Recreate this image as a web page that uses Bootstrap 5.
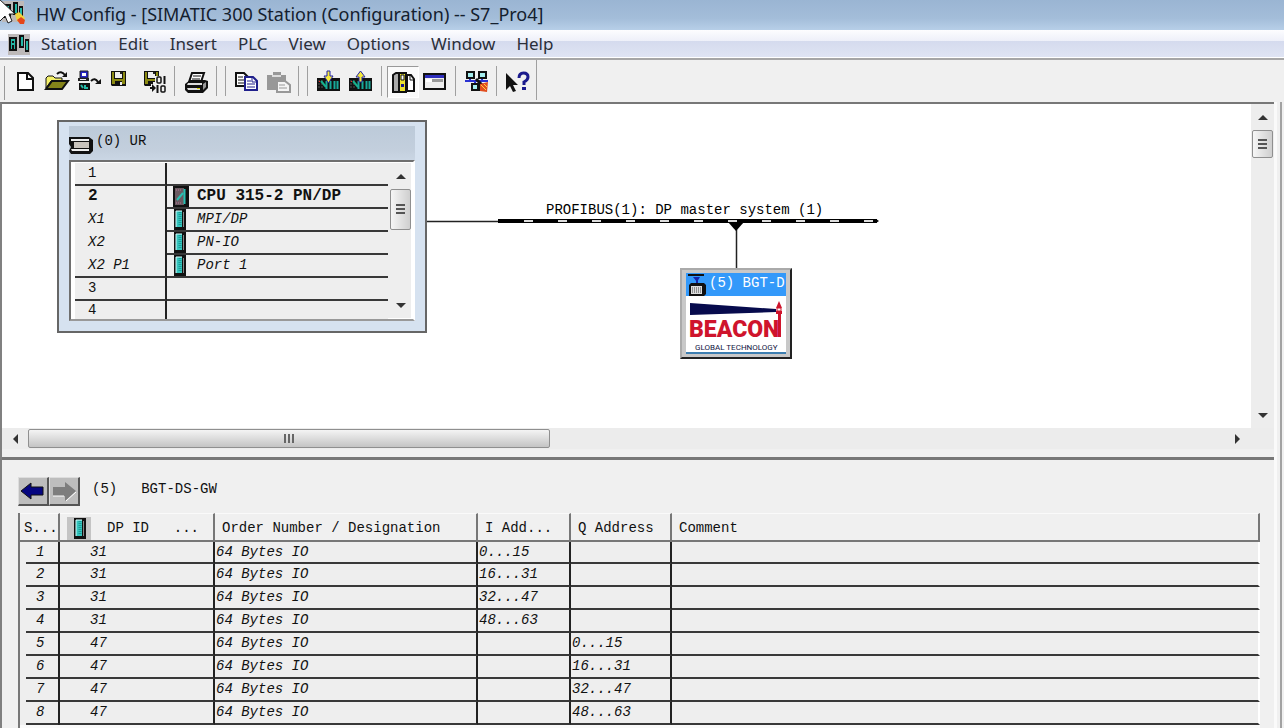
<!DOCTYPE html>
<html lang="en">
<head>
<meta charset="utf-8">
<meta name="viewport" content="width=device-width, initial-scale=1">
<title>HW Config - [SIMATIC 300 Station (Configuration) -- S7_Pro4]</title>
<link href="https://cdn.jsdelivr.net/npm/bootstrap@5.3.0/dist/css/bootstrap.min.css" rel="stylesheet">
<style>
:root { --face:#f0f0f0; --cell:#eee; --rule:#383838; }
body { background:var(--face); color:#111; font:14px/20px "Liberation Mono", monospace; overflow:hidden; }
button { padding:0; border:0; background:none; color:inherit; }
svg { display:block; }
.ui-text { font-family:"Noto Sans", "Open Sans", sans-serif; font-size:17px; line-height:26px; }

.title-strip { height:30px; padding-left:36px; background:linear-gradient(#9ab5d3,#a3bdd9 60%,#b7cfe8); position:relative; }
.title-strip h1 { font-size:18px; line-height:28px; margin:0; font-weight:400; color:#14202e; }
.title-icon { position:absolute; left:0; top:0; }
.menu-strip { height:28px; gap:1px; padding-left:8px; background:linear-gradient(#fdfdff,#eef0f9 40%,#d5dbee 42%,#dfe4f3); border-bottom:1px solid #fff; color:#2b2f3a; }
.menu-strip button { padding:0 10px; }
.menu-strip svg { margin-right:-1px; }
.tool-strip { height:44px; padding:6px 0 0 9px; border-top:2px solid #a6a6a6; position:relative; }
.tool-strip::before { content:""; position:absolute; left:4px; top:6px; width:1px; height:34px; background:#999; }
.tool { width:32px; height:32px; }
.tool.pressed { background:#fafafa; border:1px solid #fff; border-top-color:#999; border-left-color:#999; }
.tool.pressed svg { margin:-1px; }
.split { width:11px; height:30px; display:flex; justify-content:center; gap:8px; }
.split.slim { width:9px; }
.split.twin { width:18px; }
.split i { width:1px; background:#a0a0a0; }
.split.last { width:6px; height:40px; margin-top:-6px; }

.work { min-width:0; border-top:2px solid #777; border-left:2px solid #808080; }
.frame-edge { flex:0 0 10px; background:linear-gradient(90deg,#fafafa 3px,#f0f0f0 3px,#f0f0f0 6px,#a2a2a2 6px,#a2a2a2 8px,#f0f0f0 8px); }
.canvas { background:#fff; height:324px; position:relative; overflow:hidden; }

.vbar { width:23px; background:#ededed; }
.vbar button, .hbar button { display:flex; align-items:center; justify-content:center; }
.vbar button { height:26px; }
.vthumb { height:28px; margin:0 1px; border:1px solid #8f8f8f; border-radius:2px; background:linear-gradient(90deg,#f6f6f6,#e2e2e2 50%,#cfcfcf); display:flex; align-items:center; justify-content:center; }
.hbar { height:21px; background:#ececec; }
.hbar button { width:26px; }
.hthumb { width:41%; margin:1px 0; border:1px solid #8f8f8f; border-radius:2px; background:linear-gradient(#f4f4f4,#dcdcdc 50%,#c4c4c4); display:flex; align-items:center; justify-content:center; }

/* rack and slave are nodes on the station canvas */
.rack { position:absolute; left:55px; top:16px; width:370px; height:213px; border:2px solid #666; background:#d6e2f0; padding:4px 10px 10px; }
.rack-title { height:34px; padding:4px 0 0; background:linear-gradient(#bccad9,#c3cfdd 70%,#cad6e4); display:flex; align-items:center; gap:3px; }
.rack-title span { margin-top:-8px; }
.rack-list { border:2px solid #6f6f6f; border-right-color:#fff; border-bottom-color:#999; background:#fff; height:161px; display:flex; padding:1px 2px 1px 4px; overflow:hidden; }
.rack-table { border-collapse:separate; border-spacing:0; background:var(--cell); flex:1; }
.rack-table td { height:23px; padding:0; line-height:21px; border-bottom:2px solid var(--rule); white-space:nowrap; vertical-align:top; }
.rack-table tr:last-child td { border-bottom:0; height:19px; line-height:19px; }
.rack-table td:first-child { width:92px; padding-left:13px; border-right:2px solid #222; }
.rack-table tr.open td:first-child { border-bottom:0; }
.rack-table svg { flex:none; }
.rack-scroll { width:23px; padding-left:2px; background:#eee; }
.rack-scroll .vthumb { height:41px; margin:0; }
.slot { display:flex; height:21px; padding-left:6px; }
.slot svg { width:24px; }
.rack-table tr.cpu { font-size:16px; font-weight:700; }

.bus { position:absolute; left:425px; top:96px; }
.slave { position:absolute; left:678px; top:164px; width:112px; height:91px; border:2px solid #aaa; border-right-color:#222; border-bottom-color:#222; background:#c8c8c8; padding:3px 4px 4px; }
.slave-name { background:#3399fa; color:#fff; display:flex; height:23px; white-space:nowrap; line-height:21px; gap:3px; }

.detail { border-top:3px solid #777; margin-top:8px; padding:17px 14px 0 16px; background:var(--face); }
.detail-head { line-height:24px; }
.nav-btn { width:31px; height:29px; background:#bdbdbd; border:1px solid #ddd; border-right:2px solid #555; border-bottom:2px solid #555; }
.mod-wrap { margin-top:7px; padding-bottom:8px; border-left:2px solid #777; background:#fafafa; }
.mod-table { border-collapse:separate; border-spacing:0; width:100%; table-layout:fixed; }
.mod-table th { background:var(--face); font-weight:400; height:29px; line-height:23px; padding:3px 6px 0 7px; border-right:2px solid #777; border-bottom:2px solid #777; border-top:1px solid #fafafa; white-space:nowrap; overflow:hidden; vertical-align:top; }
.mod-table th:first-child { padding:3px 0 0 4px; }
.mod-table td { height:23px; line-height:21px; padding:0 0 0 1px; vertical-align:top; font-style:italic; background:var(--cell); border-right:2px solid #222; border-bottom:2px solid var(--rule); white-space:nowrap; }
.mod-table tbody tr:first-child td { height:22px; line-height:20px; }
.mod-table td:last-child { border-right-color:#fff; }
.mod-table td:first-child { padding-left:16px; border-bottom:0; background:linear-gradient(var(--rule),var(--rule)) 6px 100%/100% 2px no-repeat var(--cell); }
.mod-table td:nth-child(2) { padding-left:30px; }
</style>
</head>
<body>
<svg width="0" height="0" class="position-absolute" aria-hidden="true">
  <defs>
    <g id="modIcon"><path d="M1 0h12v21H1z" fill="#111"/><path d="M3 2h6v16H3z" fill="#35c5bd"/><path d="M3 2v16M3 2h6" stroke="#d8ffff" stroke-width="1"/><path d="M7 3v14" stroke="#1c9a97" stroke-width="3" stroke-dasharray="1 1"/><path d="M10 3h1v15h-1z" fill="#888"/></g>
    <g id="disk"><path d="M0 0h15v15H1L0 14z" fill="#111"/><path d="M1 1h2v7h9V1h2v12H1z" fill="#8b8a12"/><path d="M4 1h7v6H4z" fill="#eee"/><path d="M9 1h2v2H9z" fill="#222"/><path d="M4 10h7v4H4z" fill="#111"/><path d="M9 11h2v3H9z" fill="#eee"/></g>
    <g id="plc"><path d="M0 0h23v13H0z" fill="#111"/><path d="M2 2v9M5 2v9" stroke="#555" stroke-dasharray="2 1"/><path d="M2 3h1v1H2z" fill="#f22"/><path d="M4 3l5 6" stroke="#16b08c" stroke-width="2"/><path d="M9.500 3v8M13.500 3v8M17.500 3v8M20.500 3v8" stroke="#18a99a" stroke-width="2"/></g>
    <g id="station"><path d="M0 0h22v21H0z" fill="#bdb9b9"/><path d="M1 3h8v14H1zM11 1h5v13h-5zM17 5h4v13h-4z" fill="#111"/><path d="M3 5h4v10H3zM13 3h2v9h-2zM18 7h2v9h-2z" fill="#25b9a7"/><path d="M4 7h2v2H4zM4 11h2v4H4z" fill="#111"/></g>
  </defs>
</svg>

<header class="title-strip ui-text">
  <svg class="title-icon" width="30" height="28" viewBox="0 0 30 28"><use href="#station" x="2" y="1"/><path d="M15 14l4-2 6 6-3 5-5-2z" fill="#f1d33c"/><path d="M17 20l4-3 4 3-1 4h-4z" fill="#e5471b"/><path d="M-2 -2L15 14l-6 0 3 7-4 2-3-7-5 5-3-2z" fill="#fff" stroke="#222"/></svg>
  <h1>HW Config - [SIMATIC 300 Station (Configuration) -- S7_Pro4]</h1>
</header>

<nav class="menu-strip ui-text d-flex" aria-label="Main menu">
  <svg class="mt-1" width="23" height="22"><use href="#station"/></svg>
  <button>Station</button><button>Edit</button><button>Insert</button><button>PLC</button><button>View</button><button>Options</button><button>Window</button><button>Help</button>
</nav>

<div class="tool-strip d-flex" role="toolbar" aria-label="Standard">
  <button class="tool" aria-label="New"><svg width="32" height="32"><path d="M9 7h10l5 5v12H9z" fill="#fff" stroke="#111" stroke-width="2"/><path d="M18 7v6h6" fill="none" stroke="#111" stroke-width="2"/></svg></button>
  <button class="tool" aria-label="Open"><svg width="32" height="32"><path d="M5 22V12l2-2h5l2 2h7v3H10z" fill="#f4f06a" stroke="#111"/><path d="M5 23l6-8h16l-6 8z" fill="#85841a" stroke="#111" stroke-width="2"/><path d="M16 8q4-4 8 1" fill="none" stroke="#111" stroke-width="2"/><path d="M21 11h5V6z" fill="#111"/></svg></button>
  <button class="tool" aria-label="Open online"><svg width="32" height="32"><path d="M7 5h8v7H7z" fill="#2424c8" stroke="#222"/><path d="M9 7h4v3H9z" fill="#fff"/><path d="M5 12h11v3H5z" fill="#222"/><path d="M7 13h6v1H7z" fill="#eee"/><path d="M6 17h11v7H6z" fill="#111"/><path d="M8 19l2 3M12 19v3h3" stroke="#25b9a7" stroke-width="2" fill="none"/><path d="M18 15q4-4 7 1" fill="none" stroke="#111" stroke-width="2"/><path d="M22 18h6v-5z" fill="#111"/></svg></button>
  <button class="tool" aria-label="Save"><svg width="32" height="32"><use href="#disk" x="6" y="5"/></svg></button>
  <button class="tool" aria-label="Save and compile"><svg width="32" height="32"><use href="#disk" x="7" y="5"/><path d="M18 10h12v18H18zM14 18h5v9h-5z" fill="#f0f0f0"/><rect x="20" y="11" width="4" height="6" rx="1" fill="none" stroke="#111" stroke-width="1.500"/><path d="M27.500 10v8M20.500 19v8M13 22h5" stroke="#111" stroke-width="2" fill="none"/><rect x="24" y="20" width="4" height="6" rx="1" fill="none" stroke="#111" stroke-width="1.500"/><path d="M15 18l4 4-4 4z" fill="#111"/></svg></button>
  <span class="split"><i></i></span>
  <button class="tool" aria-label="Print"><svg width="32" height="32"><path d="M12 7h12l-3 9H9z" fill="#fff" stroke="#111" stroke-width="2"/><path d="M13 10h8M12 13h8" stroke="#111"/><path d="M5 18l5-4h15l3 1v7l-5 5H8l-3-3z" fill="#111"/><path d="M8 17h14v2H7zM7 22h13v2H8z" fill="#ddd"/><path d="M17 22h3v1h-3z" fill="#d5d000"/><path d="M23 18l3-2v5l-3 3z" fill="#999"/></svg></button>
  <span class="split twin"><i></i><i></i></span>
  <button class="tool" aria-label="Copy"><svg width="32" height="32"><path d="M6 7h8l4 4v9H6z" fill="#fff" stroke="#111" stroke-width="2"/><path d="M8 11h5M8 14h7M8 17h7" stroke="#111"/><path d="M15 11h8l4 4v9H15z" fill="#fff" stroke="#20208c" stroke-width="2"/><path d="M22 11v5h5" fill="none" stroke="#20208c"/><path d="M17 15h4M17 18h8M17 21h8" stroke="#20208c"/></svg></button>
  <button class="tool" aria-label="Paste" disabled><svg width="32" height="32"><path d="M5 9h6V6h8v3h5v15H5z" fill="#989898"/><path d="M10 10h9" stroke="#ddd" stroke-width="2"/><path d="M15 15h8l5 4v7H15z" fill="#f4f4f4" stroke="#989898" stroke-width="2"/><path d="M17 19h6M17 22h8" stroke="#989898"/></svg></button>
  <span class="split twin"><i></i><i></i></span>
  <button class="tool" aria-label="Download"><svg width="32" height="32"><use href="#plc" x="5" y="12"/><path d="M15 5h3v5h3l-4.500 7-4.500-7h3z" fill="#f5e93c" stroke="#2323a5" stroke-width="1"/></svg></button>
  <button class="tool" aria-label="Upload"><svg width="32" height="32"><use href="#plc" x="5" y="12"/><path d="M15 16h3v-5h3l-4.500-6-4.500 6h3z" fill="#f5e93c" stroke="#2323a5" stroke-width="1"/></svg></button>
  <span class="split"><i></i></span>
  <button class="tool pressed" aria-label="Catalog"><svg width="32" height="32"><path d="M6 9l3-2h4v19H6z" fill="#aaa" stroke="#111" stroke-width="2"/><path d="M12 7h7v19h-7z" fill="#ebe22f" stroke="#111" stroke-width="2"/><path d="M14 9h3v5h-3z" fill="#fff" stroke="#111"/><path d="M14 18h3v3h-3z" fill="#17178c"/><path d="M20 9h4l3 4v12h-7z" fill="#fff" stroke="#111" stroke-width="2"/><path d="M23 9v5h4" fill="none" stroke="#111"/></svg></button>
  <button class="tool" aria-label="Address overview"><svg width="32" height="32"><path d="M5 8h21v15H5z" fill="#eee" stroke="#111" stroke-width="2"/><path d="M6 9h19v3H6z" fill="#2e2ebd"/><path d="M7 13h6v3H7z" fill="#fff"/><path d="M13 13h11v3H13z" fill="#999"/></svg></button>
  <span class="split slim"><i></i></span>
  <button class="tool" aria-label="Configure network"><svg width="32" height="32"><path d="M6 5h9v8H6zM18 5h9v8h-9zM11 17h9v8h-9z" fill="#111"/><path d="M8 7h5v4H8zM20 7h5v4h-5zM13 19h4v4h-4z" fill="#a5eeee"/><path d="M5 15h23M10 13v2M22 13v2M15 15v2" stroke="#2a32d2" stroke-width="2"/><path d="M16 13l9 9" stroke="#111" stroke-width="3"/><path d="M20 18l8-2-1 10-7-1z" fill="#e14d1e"/><path d="M21 19l5 5M24 18l3 3" stroke="#ffd43c" stroke-width="1"/></svg></button>
  <span class="split slim"><i></i></span>
  <button class="tool" aria-label="Help pointer"><svg width="32" height="32"><path d="M5 7v17l4-4 3 6 3-1-3-6h5z" fill="#111"/><path d="M18 12q0-5 4.500-5t4.500 4q0 3-4 5v3" fill="none" stroke="#1b1b8d" stroke-width="3"/><path d="M21 21h4v3h-4z" fill="#1b1b8d"/></svg></button>
  <span class="split last"><i></i></span>
</div>

<main class="d-flex">
  <div class="work flex-grow-1">
    <section aria-label="Station view">
      <div class="d-flex">
        <div class="canvas flex-grow-1">
          <div class="rack">
            <div class="rack-title">
              <svg width="24" height="18" viewBox="0 0 24 18"><path d="M0 1h20l4 3v11l-3 3H2l-2-3 2-4-2-3z" fill="#111"/><path d="M2 3h18v2H2zM2 13h18v2H3z" fill="#eee"/><path d="M5 6h15v6H5z" fill="#c9c4bd"/></svg>
              <span>(0) UR</span>
            </div>
            <div class="rack-list">
              <table class="rack-table">
                <tr><td>1</td><td></td></tr>
                <tr class="open cpu"><td>2</td><td><div class="slot"><svg width="24" height="21"><path d="M0 0h16v21H0z" fill="#111"/><path d="M2 2h9v17H2z" fill="#6b5b62"/><path d="M4 14l6-7" stroke="#27c2b4" stroke-width="2"/><path d="M11.500 3v15" stroke="#27c2b4" stroke-width="2"/><path d="M3 4h6M3 17h6" stroke="#b79" stroke-dasharray="1 1"/></svg>CPU 315-2 PN/DP</div></td></tr>
                <tr class="open fst-italic"><td>X1</td><td><div class="slot"><svg width="24" height="21"><use href="#modIcon"/></svg>MPI/DP</div></td></tr>
                <tr class="open fst-italic"><td>X2</td><td><div class="slot"><svg width="24" height="21"><use href="#modIcon"/></svg>PN-IO</div></td></tr>
                <tr class="fst-italic"><td>X2 P1</td><td><div class="slot"><svg width="24" height="21"><use href="#modIcon"/></svg>Port 1</div></td></tr>
                <tr><td>3</td><td></td></tr>
                <tr><td>4</td><td></td></tr>
              </table>
              <div class="vbar rack-scroll d-flex flex-column">
                <button aria-label="Scroll up"><svg width="10" height="5"><path d="M0 5l5-5 5 5z" fill="#333"/></svg></button>
                <div class="vthumb"><svg width="9" height="11"><path d="M0 1h9M0 5h9M0 9h9" stroke="#555" stroke-width="2"/></svg></div>
                <button class="mt-auto" aria-label="Scroll down"><svg width="10" height="5"><path d="M0 0l5 5 5-5z" fill="#333"/></svg></button>
              </div>
            </div>
          </div>

          <svg class="bus" width="460" height="70" viewBox="0 0 460 70">
            <path d="M0 21.500h71M309.500 20v48" stroke="#222" stroke-width="1.500"/>
            <path d="M71 21h379" stroke="#000" stroke-width="4"/><path d="M449 19l3 2-3 2z"/>
            <path d="M97 21h350" stroke="#ddd" stroke-width="2" stroke-dasharray="9 25"/>
            <path d="M301 22h16l-8 9z"/>
            <text x="119" y="14" font-size="14">PROFIBUS(1): DP master system (1)</text>
          </svg>

          <div class="slave">
            <div class="slave-name">
              <svg class="flex-shrink-0" width="20" height="23"><path d="M2 2h16" stroke="#111" stroke-width="2"/><path d="M7 4h7l-3 5z" fill="#1723a8"/><path d="M10 7h2v4h-2z" fill="#1723a8"/><path d="M3 12l2-2h13l2 2v9l-2 2H3z" fill="#111"/><path d="M5 13h11v8H5z" fill="#ddd"/><path d="M6 15h10M6 17h10M6 19h10" stroke="#444" stroke-dasharray="1 1"/></svg>
              <span>(5) BGT-D</span>
            </div>
            <svg width="100" height="58" viewBox="0 0 100 58">
              <path d="M0 0h100v58H0z" fill="#fff"/>
              <path d="M4 7l86 6v3L4 19z" fill="#070b4d"/>
              <path d="M93 5l3 7h-6zM90 15h6v3h-6zM92 18h3v23h-3z" fill="#cf142c"/><path d="M91 12h4v3h-4z" fill="#fff" stroke="#cf142c"/>
              <text x="3" y="41" font-family="Roboto" font-weight="900" font-size="23" fill="#cf142c">BEACON</text>
              <text x="9" y="54" font-family="Roboto" font-size="8" fill="#111544">GLOBAL TECHNOLOGY</text>
              <path d="M0 56h100v2H0z" fill="#3d7eb0"/>
            </svg>
          </div>
        </div>
        <div class="vbar d-flex flex-column">
          <button aria-label="Scroll up"><svg width="10" height="5"><path d="M0 5l5-5 5 5z" fill="#333"/></svg></button>
          <div class="vthumb"><svg width="9" height="12"><path d="M0 2h9M0 6h9M0 10h9" stroke="#555" stroke-width="2"/></svg></div>
          <button class="mt-auto" aria-label="Scroll down"><svg width="10" height="5"><path d="M0 0l5 5 5-5z" fill="#333"/></svg></button>
        </div>
      </div>
      <div class="hbar d-flex">
        <button aria-label="Scroll left"><svg width="5" height="10"><path d="M5 0L0 5l5 5z" fill="#333"/></svg></button>
        <div class="hthumb"><svg width="12" height="9"><path d="M2 0v9M6 0v9M10 0v9" stroke="#666" stroke-width="2"/></svg></div>
        <button class="ms-auto me-4" aria-label="Scroll right"><svg width="5" height="10"><path d="M0 0l5 5-5 5z" fill="#333"/></svg></button>
      </div>
    </section>

    <section class="detail" aria-label="Module details">
      <div class="detail-head d-flex align-items-start">
        <button class="nav-btn" aria-label="Previous"><svg width="28" height="26"><path d="M2 13l10-8v4h12v8H12v4z" fill="#050580" stroke="#111"/></svg></button>
        <button class="nav-btn" aria-label="Next"><svg width="28" height="26"><path d="M26 13l-11-9v5H3v9h12v5z" fill="#7d7d7d"/><path d="M3 18h11M16 23l10-9" stroke="#fff" stroke-width="1"/></svg></button>
        <span class="ms-2 ps-1">(5)</span><span class="ms-4">BGT-DS-GW</span>
      </div>
      <div class="mod-wrap">
        <table class="mod-table">
          <colgroup><col style="width:40px"><col style="width:155px"><col style="width:263px"><col style="width:93px"><col style="width:101px"><col></colgroup>
          <thead><tr>
            <th>S...</th>
            <th><div class="d-flex"><svg class="me-3" width="24" height="23"><path d="M0 0h24v23H0z" fill="#c4c4c4"/><use href="#modIcon" x="6" y="1"/></svg>DP ID<span class="ms-auto pe-2">...</span></div></th>
            <th>Order Number / Designation</th><th>I Add...</th><th>Q Address</th><th>Comment</th>
          </tr></thead>
          <tbody>
            <tr><td>1</td><td>31</td><td>64 Bytes IO</td><td>0...15</td><td></td><td></td></tr>
            <tr><td>2</td><td>31</td><td>64 Bytes IO</td><td>16...31</td><td></td><td></td></tr>
            <tr><td>3</td><td>31</td><td>64 Bytes IO</td><td>32...47</td><td></td><td></td></tr>
            <tr><td>4</td><td>31</td><td>64 Bytes IO</td><td>48...63</td><td></td><td></td></tr>
            <tr><td>5</td><td>47</td><td>64 Bytes IO</td><td></td><td>0...15</td><td></td></tr>
            <tr><td>6</td><td>47</td><td>64 Bytes IO</td><td></td><td>16...31</td><td></td></tr>
            <tr><td>7</td><td>47</td><td>64 Bytes IO</td><td></td><td>32...47</td><td></td></tr>
            <tr><td>8</td><td>47</td><td>64 Bytes IO</td><td></td><td>48...63</td><td></td></tr>
          </tbody>
        </table>
      </div>
    </section>
  </div>
  <div class="frame-edge"></div>
</main>
<script src="https://cdn.jsdelivr.net/npm/bootstrap@5.3.0/dist/js/bootstrap.bundle.min.js"></script>
</body>
</html>
